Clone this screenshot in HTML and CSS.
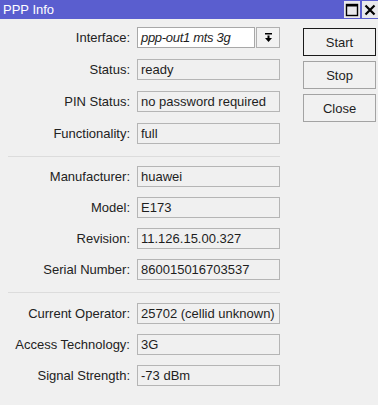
FILE: index.html
```html
<!DOCTYPE html>
<html>
<head>
<meta charset="utf-8">
<title>PPP Info</title>
<link rel="stylesheet" href="styles.css">
</head>
<body>
<div class="window">
  <div class="titlebar">
    <span class="title">PPP Info</span>
    <div class="win-controls">
      <span class="ctl"><svg width="14" height="14" viewBox="0 0 14 14"><rect x="1.5" y="1.5" width="11" height="11" fill="none" stroke="#000" stroke-width="1.4"/><rect x="2" y="2" width="10" height="1.5" fill="#000"/></svg></span>
      <span class="ctl"><svg width="14" height="14" viewBox="0 0 14 14"><path d="M2.5 2.5 L11.5 11.5 M11.5 2.5 L2.5 11.5" stroke="#000" stroke-width="2.2"/></svg></span>
    </div>
  </div>
  <div class="content">
    <div class="form">
      <div class="group g1">
        <div class="row"><span class="label">Interface:</span>
          <div class="combo"><span class="field input">ppp-out1 mts 3g</span><span class="dd"><svg width="9" height="10" viewBox="0 0 9 10"><rect x="1" y="0" width="7" height="1.5" fill="#000"/><rect x="3.5" y="2.5" width="2" height="3" fill="#000"/><path d="M1 5 L8 5 L4.5 9 Z" fill="#000"/></svg></span></div>
        </div>
        <div class="row"><span class="label">Status:</span><span class="field">ready</span></div>
        <div class="row"><span class="label">PIN Status:</span><span class="field">no password required</span></div>
        <div class="row"><span class="label">Functionality:</span><span class="field">full</span></div>
      </div>
      <div class="sep s1"></div>
      <div class="group g2">
        <div class="row"><span class="label">Manufacturer:</span><span class="field">huawei</span></div>
        <div class="row"><span class="label">Model:</span><span class="field">E173</span></div>
        <div class="row"><span class="label">Revision:</span><span class="field">11.126.15.00.327</span></div>
        <div class="row"><span class="label">Serial Number:</span><span class="field">860015016703537</span></div>
      </div>
      <div class="sep s2"></div>
      <div class="group g3">
        <div class="row"><span class="label">Current Operator:</span><span class="field">25702 (cellid unknown)</span></div>
        <div class="row"><span class="label">Access Technology:</span><span class="field">3G</span></div>
        <div class="row"><span class="label">Signal Strength:</span><span class="field">-73 dBm</span></div>
      </div>
    </div>
    <div class="buttons">
      <button class="btn default">Start</button>
      <button class="btn">Stop</button>
      <button class="btn">Close</button>
    </div>
  </div>
</div>
</body>
</html>
```

FILE: styles.css
```css
* { box-sizing: border-box; }
html, body {
  margin: 0;
  padding: 0;
  background: #f0f0f0;
}
body {
  font-family: "Liberation Sans", Arial, sans-serif;
  font-size: 13px;
  color: #1e1e1e;
}
.window {
  width: 378px;
  height: 405px;
  background: #f0f0f0;
  overflow: hidden;
}
.titlebar {
  height: 19px;
  background: #5a5ecf;
  display: flex;
  justify-content: space-between;
  align-items: flex-start;
}
.title {
  color: #ffffff;
  line-height: 19px;
  padding-left: 3px;
}
.win-controls {
  display: flex;
  gap: 2px;
  padding-top: 1px;
}
.ctl {
  width: 16px;
  height: 17px;
  background: #e8e8ec;
  display: flex;
  align-items: center;
  justify-content: center;
}
.content {
  display: flex;
  padding-top: 8px;
}
.form {
  width: 280px;
  display: flex;
  flex-direction: column;
}
.group {
  display: flex;
  flex-direction: column;
}
.g1 { gap: 11px; }
.g2 { gap: 10px; }
.g3 { gap: 10px; }
.row {
  display: grid;
  grid-template-columns: 130px 143px;
  column-gap: 7px;
  height: 21px;
}
.label {
  text-align: right;
  line-height: 21px;
  white-space: nowrap;
  color: #222;
}
.field {
  display: block;
  height: 21px;
  border: 1px solid #b5b5b5;
  padding-left: 3px;
  line-height: 19px;
  white-space: nowrap;
  overflow: hidden;
  background: #f0f0f0;
}
.combo {
  display: flex;
  gap: 1px;
}
.field.input {
  flex: 1;
  background: #ffffff;
  border-color: #a8a8a8;
  font-style: italic;
  letter-spacing: -0.3px;
}
.dd {
  width: 24px;
  height: 21px;
  border: 1px solid #b0b0b0;
  background: #f2f2f2;
  display: flex;
  align-items: center;
  justify-content: center;
}
.sep {
  height: 1px;
  background: #dcdcdc;
  margin-left: 8px;
}
.s1 { margin-top: 12px; margin-bottom: 9px; }
.s2 { margin-top: 12px; margin-bottom: 10px; }
.buttons {
  margin-left: 23px;
  padding-top: 1px;
  display: flex;
  flex-direction: column;
  gap: 5px;
}
.btn {
  width: 73px;
  height: 28px;
  background: #f1f1f1;
  border: 1px solid #a3a3a3;
  font-family: "Liberation Sans", Arial, sans-serif;
  font-size: 13px;
  color: #1e1e1e;
  padding: 0;
}
.btn.default {
  border-color: #1a1a1a;
}
```
